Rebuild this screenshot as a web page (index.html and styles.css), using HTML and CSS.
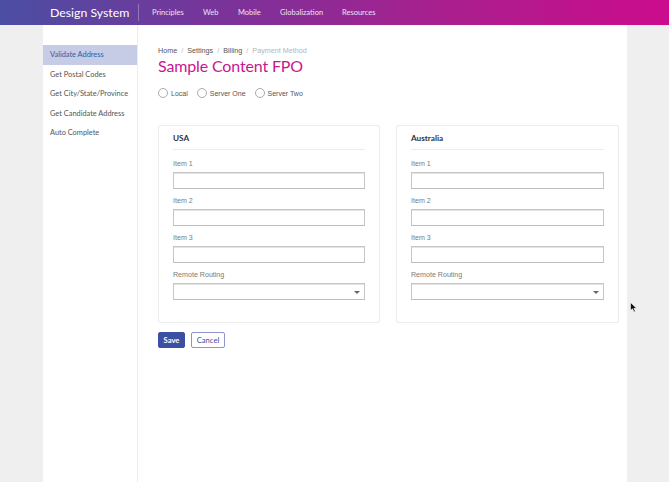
FILE: index.html
```html
<!DOCTYPE html>
<html>
<head>
<meta charset="utf-8">
<link rel="stylesheet" href="styles.css">
</head>
<body>
<header class="topbar">
  <div class="brand">Design System</div>
  <div class="divider"></div>
  <nav class="nav">
    <span>Principles</span>
    <span>Web</span>
    <span>Mobile</span>
    <span>Globalization</span>
    <span>Resources</span>
  </nav>
</header>
<div class="shell">
  <aside class="sidebar">
    <div class="side-item active">Validate Address</div>
    <div class="side-item">Get Postal Codes</div>
    <div class="side-item">Get City/State/Province</div>
    <div class="side-item">Get Candidate Address</div>
    <div class="side-item">Auto Complete</div>
  </aside>
  <main class="main">
    <div class="crumbs">
      <span>Home</span><span class="sep">/</span><span>Settings</span><span class="sep">/</span><span>Billing</span><span class="sep">/</span><span class="current">Payment Method</span>
    </div>
    <h1 class="title">Sample Content FPO</h1>
    <div class="radios">
      <label class="radio"><span class="circle"></span>Local</label>
      <label class="radio"><span class="circle"></span>Server One</label>
      <label class="radio"><span class="circle"></span>Server Two</label>
    </div>
    <div class="cards">
      <section class="card">
        <h2 class="card-title">USA</h2>
        <div class="field"><div class="label">Item 1</div><div class="input"></div></div>
        <div class="field"><div class="label">Item 2</div><div class="input"></div></div>
        <div class="field"><div class="label">Item 3</div><div class="input"></div></div>
        <div class="field"><div class="label">Remote Routing</div><div class="input select"><span class="caret"></span></div></div>
      </section>
      <section class="card">
        <h2 class="card-title">Australia</h2>
        <div class="field"><div class="label">Item 1</div><div class="input"></div></div>
        <div class="field"><div class="label">Item 2</div><div class="input"></div></div>
        <div class="field"><div class="label">Item 3</div><div class="input"></div></div>
        <div class="field"><div class="label">Remote Routing</div><div class="input select"><span class="caret"></span></div></div>
      </section>
    </div>
    <div class="actions">
      <button class="btn primary">Save</button>
      <button class="btn secondary">Cancel</button>
    </div>
  </main>
</div>
<svg class="cursor" width="8" height="11" viewBox="0 0 8 11"><path d="M0.5 0.5 L0.5 8.5 L2.5 6.8 L4 10 L5.3 9.4 L3.9 6.3 L6.6 6.3 Z" fill="#111" stroke="#fff" stroke-width="0.6"/></svg>
</body>
</html>
```
FILE: styles.css
```css
* { box-sizing: border-box; }
html, body { margin: 0; padding: 0; }
body {
  background: #efefef;
  font-family: "Lato", "Open Sans", sans-serif;
  width: 669px;
  height: 482px;
  overflow: hidden;
  position: relative;
}
.topbar {
  height: 25px;
  background: linear-gradient(90deg, #4b4ea3 0%, #7c3299 35%, #a8208f 65%, #cc0c8c 100%);
  display: flex;
  align-items: center;
  padding-left: 50px;
  color: #fff;
}
.brand {
  font-size: 12.3px;
  width: 80px;
  white-space: nowrap;
}
.divider {
  width: 1px;
  height: 17px;
  background: rgba(255,255,255,0.3);
  margin-left: 8px;
}
.nav {
  display: flex;
  margin-left: 13px;
  font-size: 7.5px;
  color: #ece3f3;
  white-space: nowrap;
}
.nav span:nth-child(1) { width: 51px; }
.nav span:nth-child(2) { width: 35px; }
.nav span:nth-child(3) { width: 42px; }
.nav span:nth-child(4) { width: 62px; }
.shell {
  display: flex;
  margin-left: 43px;
  width: 584px;
  height: 457px;
  background: #fff;
}
.sidebar {
  width: 95px;
  border-right: 1px solid #ececec;
  padding-top: 20px;
}
.side-item {
  height: 19.5px;
  line-height: 19.5px;
  padding-left: 7px;
  font-size: 7.4px;
  color: #555;
  white-space: nowrap;
}
.side-item.active {
  background: #c6cbe6;
  color: #2d5ea8;
}
.main {
  flex: 1;
  padding: 21px 8px 0 20px;
}
.crumbs {
  font-family: "Liberation Sans", Arial, sans-serif;
  font-size: 7.2px;
  color: #555;
  line-height: 9px;
}
.crumbs .sep { color: #bbb; margin: 0 4px; }
.crumbs .current { color: #b5b5b5; }
.title {
  margin: 0;
  font-weight: 400;
  font-size: 16px;
  letter-spacing: -0.15px;
  line-height: 22px;
  color: #c9158f;
}
.radios {
  display: flex;
  margin-top: 9px;
  height: 14px;
  align-items: center;
  font-family: "Liberation Sans", Arial, sans-serif;
  font-size: 7px;
  color: #555;
}
.radio { display: flex; align-items: center; margin-right: 9px; }
.circle {
  width: 10px;
  height: 10px;
  border: 1px solid #aaa;
  border-radius: 50%;
  margin-right: 3px;
  background: #fff;
}
.cards {
  display: flex;
  gap: 16px;
  margin-top: 25px;
}
.card {
  width: 222px;
  height: 198px;
  border: 1.5px solid #ececec;
  border-radius: 2px;
  padding: 7px 14px 0 14px;
}
.card + .card { width: 223px; }
.card-title {
  margin: 0;
  font-size: 8.2px;
  font-weight: 700;
  color: #333;
  line-height: 10px;
  padding-bottom: 6px;
  border-bottom: 1px solid #ececec;
  margin-bottom: 10px;
}
.field { margin-bottom: 8px; }
.label {
  font-family: "Liberation Sans", Arial, sans-serif;
  font-size: 7.1px;
  color: #7a7a7a;
  line-height: 9px;
  margin-bottom: 3px;
}
.input {
  height: 17px;
  border: 1px solid #c6c6c6;
  border-bottom-color: #bdbdbd;
  box-shadow: inset 0 1px 0 #e4e4e4;
  background: #fff;
  position: relative;
}
.caret {
  position: absolute;
  right: 4px;
  top: 6.5px;
  width: 0;
  height: 0;
  border-left: 3px solid transparent;
  border-right: 3px solid transparent;
  border-top: 3.5px solid #666;
}
.actions {
  display: flex;
  gap: 6px;
  margin-top: 9px;
}
.btn {
  height: 16px;
  padding: 0;
  font-family: "Lato", "Open Sans", sans-serif;
  font-size: 7.6px;
  border-radius: 2px;
  line-height: 14px;
}
.btn.primary {
  width: 27px;
  background: #3d4fa3;
  border: 1px solid #3d4fa3;
  color: #fff;
  font-weight: 700;
}
.btn.secondary {
  width: 34px;
  background: #fff;
  border: 1px solid #8d96cc;
  color: #3d4fa3;
}
.cursor {
  position: absolute;
  left: 630px;
  top: 302px;
}
```
